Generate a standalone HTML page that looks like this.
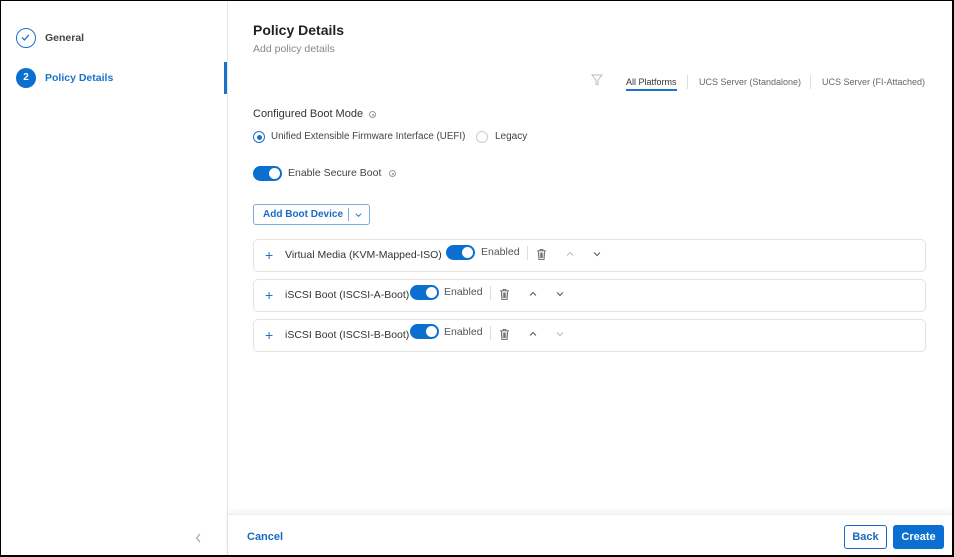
<!DOCTYPE html>
<html><head><meta charset="utf-8"><style>
*{box-sizing:border-box;margin:0;padding:0}
body{width:954px;height:557px;overflow:hidden;font-family:"Liberation Sans",sans-serif;background:#fff;position:relative;color:#333}
.frame{position:absolute;inset:0;border:1px solid #000;border-right:2px solid #000;border-bottom:2px solid #000;pointer-events:none;z-index:10}
.side{position:absolute;left:0;top:0;width:228px;height:557px;border-right:1px solid #e6e6e6}
.ab{position:absolute;white-space:nowrap}
.step{position:absolute;left:16px;width:20px;height:20px;border-radius:50%}
.tab{font-size:9px;color:#666}
.box{position:absolute;left:253px;width:673px;height:33px;border:1px solid #e3e3e3;border-radius:5px}
.tg{position:absolute;width:29px;height:15px;border-radius:8px;background:#0a6fd1}
.tg::after{content:"";position:absolute;right:2px;top:2px;width:11px;height:11px;border-radius:50%;background:#fff}
.lbl{font-size:10.5px;color:#333}
.info{position:absolute;width:7px;height:7px;border:1px solid #999;border-radius:50%}
.info::after{content:"";position:absolute;left:1.5px;top:1.5px;width:2px;height:2px;border-radius:50%;background:#999}
</style></head><body>
<div class="frame"></div>
<svg width="0" height="0" style="position:absolute"><defs>
<symbol id="tr" viewBox="0 0 12 14"><path d="M1 3h10M4.5 3V1.5h3V3M2.5 3l.7 9.5h5.6L9.5 3M4.6 5v6M6 5v6M7.4 5v6" fill="none" stroke="#666" stroke-width="1"/></symbol>
<symbol id="up" viewBox="0 0 10 6"><path d="M2 4.5L5 1.5l3 3" fill="none" stroke="currentColor" stroke-width="1"/></symbol>
<symbol id="dn" viewBox="0 0 10 6"><path d="M2 1.5L5 4.5l3-3" fill="none" stroke="currentColor" stroke-width="1"/></symbol>
</defs></svg>
<div class="side">
  <div class="step" style="top:28px;border:1.5px solid #1a73c9"><svg width="17" height="17" viewBox="0 0 17 17"><path d="M5 8.5l2.4 2.4 4.5-5" stroke="#1a73c9" stroke-width="1.3" fill="none"/></svg></div>
  <div class="ab" style="left:45px;top:32px;font-size:10.5px;font-weight:bold;color:#444">General</div>
  <div class="step" style="top:68px;background:#0a6fd1;color:#fff;font-size:10px;font-weight:bold;text-align:center;line-height:20px">2</div>
  <div class="ab" style="left:45px;top:72px;font-size:10.5px;font-weight:bold;color:#1a73c9">Policy Details</div>
  <div class="ab" style="left:224px;top:62px;width:3px;height:32px;background:#1a73c9"></div>
  <svg class="ab" style="left:195px;top:533px" width="7" height="10" viewBox="0 0 7 10"><path d="M5 1L1.5 5 5 9" fill="none" stroke="#999" stroke-width="1"/></svg>
</div>
<div class="ab" style="left:253px;top:22px;font-size:14px;font-weight:bold;color:#222">Policy Details</div>
<div class="ab" style="left:253px;top:43px;font-size:10.5px;color:#888">Add policy details</div>
<svg class="ab" style="left:591px;top:74px" width="12" height="12" viewBox="0 0 12 12"><path d="M1 1h10L7 6v5L5 10V6z" fill="none" stroke="#bbb" stroke-width="1"/></svg>
<div class="ab tab" style="left:626px;top:77px;color:#333">All Platforms</div>
<div class="ab" style="left:626px;top:89px;width:51px;height:2px;background:#1a73c9"></div>
<div class="ab" style="left:687px;top:75px;width:1px;height:14px;background:#ddd"></div>
<div class="ab tab" style="left:699px;top:77px">UCS Server (Standalone)</div>
<div class="ab" style="left:810px;top:75px;width:1px;height:14px;background:#ddd"></div>
<div class="ab tab" style="left:822px;top:77px">UCS Server (FI-Attached)</div>
<div class="ab lbl" style="left:253px;top:108px;font-size:11px">Configured Boot Mode</div>
<div class="info" style="left:369px;top:111px"></div>
<div class="ab" style="left:253px;top:131px;width:12px;height:12px;border-radius:50%;border:1px solid #1a73c9"><div style="margin:2.5px;width:5px;height:5px;border-radius:50%;background:#1a73c9"></div></div>
<div class="ab" style="left:271px;top:131px;font-size:9.8px;color:#444">Unified Extensible Firmware Interface (UEFI)</div>
<div class="ab" style="left:476px;top:131px;width:12px;height:12px;border-radius:50%;border:1px solid #ccc"></div>
<div class="ab" style="left:495px;top:131px;font-size:10px;color:#444">Legacy</div>
<div class="tg" style="left:253px;top:166px"></div>
<div class="ab lbl" style="left:288px;top:167px;color:#444;font-size:10.5px">Enable Secure Boot</div>
<div class="info" style="left:389px;top:170px"></div>
<div class="ab" style="left:253px;top:204px;width:117px;height:21px;border:1px solid #7aaee0;border-radius:3px"></div>
<div class="ab" style="left:263px;top:209px;font-size:10px;font-weight:bold;color:#1a6bbf">Add Boot Device</div>
<div class="ab" style="left:348px;top:208px;width:1px;height:13px;background:#7aaee0"></div>
<svg class="ab" style="left:354px;top:212px;color:#1a6bbf" width="9" height="6"><use href="#dn"/></svg>

<div class="box" style="top:239px"></div>
<div class="box" style="top:279px"></div>
<div class="box" style="top:319px"></div>

<div class="ab" style="left:265px;top:247px;font-size:14px;color:#1a73c9">+</div>
<div class="ab lbl" style="left:285px;top:249px">Virtual Media (KVM-Mapped-ISO)</div>
<div class="tg" style="left:446px;top:245px"></div>
<div class="ab lbl" style="left:481px;top:246px;color:#555">Enabled</div>
<div class="ab" style="left:527px;top:246px;width:1px;height:14px;background:#ddd"></div>
<svg class="ab" style="left:536px;top:248px" width="11" height="13"><use href="#tr"/></svg>
<svg class="ab" style="left:565px;top:251px;color:#bbb" width="10" height="6"><use href="#up"/></svg>
<svg class="ab" style="left:592px;top:251px;color:#555" width="10" height="6"><use href="#dn"/></svg>

<div class="ab" style="left:265px;top:287px;font-size:14px;color:#1a73c9">+</div>
<div class="ab lbl" style="left:285px;top:289px">iSCSI Boot (ISCSI-A-Boot)</div>
<div class="tg" style="left:410px;top:285px"></div>
<div class="ab lbl" style="left:444px;top:286px;color:#555">Enabled</div>
<div class="ab" style="left:490px;top:286px;width:1px;height:14px;background:#ddd"></div>
<svg class="ab" style="left:499px;top:288px" width="11" height="13"><use href="#tr"/></svg>
<svg class="ab" style="left:528px;top:291px;color:#555" width="10" height="6"><use href="#up"/></svg>
<svg class="ab" style="left:555px;top:291px;color:#555" width="10" height="6"><use href="#dn"/></svg>

<div class="ab" style="left:265px;top:327px;font-size:14px;color:#1a73c9">+</div>
<div class="ab lbl" style="left:285px;top:329px">iSCSI Boot (ISCSI-B-Boot)</div>
<div class="tg" style="left:410px;top:324px"></div>
<div class="ab lbl" style="left:444px;top:326px;color:#555">Enabled</div>
<div class="ab" style="left:490px;top:326px;width:1px;height:14px;background:#ddd"></div>
<svg class="ab" style="left:499px;top:328px" width="11" height="13"><use href="#tr"/></svg>
<svg class="ab" style="left:528px;top:331px;color:#555" width="10" height="6"><use href="#up"/></svg>
<svg class="ab" style="left:555px;top:331px;color:#bbb" width="10" height="6"><use href="#dn"/></svg>

<div class="ab" style="left:228px;top:514px;width:726px;height:43px;border-top:1px solid #eee;box-shadow:0 -3px 6px rgba(0,0,0,0.06);background:#fff"></div>
<div class="ab" style="left:247px;top:531px;font-size:11px;font-weight:bold;color:#1a6bbf">Cancel</div>
<div class="ab" style="left:844px;top:525px;width:43px;height:24px;border:1px solid #1a6bbf;border-radius:3px;font-size:11px;font-weight:bold;color:#1a6bbf;text-align:center;line-height:22px">Back</div>
<div class="ab" style="left:893px;top:525px;width:51px;height:24px;background:#0a6fd1;border-radius:3px;font-size:11px;font-weight:bold;color:#fff;text-align:center;line-height:24px">Create</div>
</body></html>
